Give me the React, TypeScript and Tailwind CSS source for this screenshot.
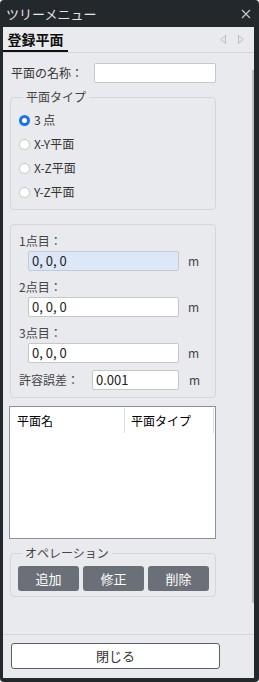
import React from "react";

const font = { fontFamily: '"Noto Sans CJK JP", "Noto Sans", sans-serif' };

function Radio({ checked, label }: { checked?: boolean; label: string }) {
  return (
    <div className="flex items-center h-[24px]">
      {checked ? (
        <div className="w-[11px] h-[11px] rounded-full border-[3.5px] border-[#1a73e8] bg-white box-border" />
      ) : (
        <div className="w-[11px] h-[11px] rounded-full border border-[#c6c8cc] bg-white box-border" />
      )}
      <span className="ml-[4px] text-[12px] leading-[14px] text-[#333]">{label}</span>
    </div>
  );
}

function PointGroup({ label, focused, first }: { label: string; focused?: boolean; first?: boolean }) {
  return (
    <div className={first ? "" : "mt-[8px]"}>
      <div className="h-[16px] leading-[16px] text-[12px] text-[#444]">{label}</div>
      <div className="flex items-center mt-[2px] ml-[9px]">
        <div
          className={
            "w-[151px] h-[20px] border rounded-[2px] box-border flex items-center pl-[3px] text-[13px] text-[#222] " +
            (focused ? "bg-[#dce8f8] border-[#c3cad4]" : "bg-white border-[#c4c7cc]")
          }
        >
          0, 0, 0
        </div>
        <span className="ml-[9px] text-[12px] text-[#444]">m</span>
      </div>
    </div>
  );
}

export default function App() {
  return (
    <div
      style={font}
      className="w-[259px] h-[682px] bg-[#23282d] rounded-[4px] pl-[3px] pr-[5px] pb-[4px] flex flex-col box-border overflow-hidden"
    >
      {/* title bar */}
      <div className="h-[27px] flex items-center justify-between shrink-0">
        <span className="ml-[3px] text-[13px] text-[#e4e6e8] leading-none">ツリーメニュー</span>
        <svg width="10" height="10" viewBox="0 0 10 10" className="mr-[3px]">
          <path d="M1 1 L9 9 M9 1 L1 9" stroke="#c8cbcf" strokeWidth="1.1" />
        </svg>
      </div>

      {/* body */}
      <div className="flex-1 bg-[#e9eaed] flex flex-col min-h-0">
        {/* tab row */}
        <div className="h-[26px] border-b border-[#d4d6d9] flex items-stretch justify-between shrink-0 box-border">
          <div className="w-[65px] border-b-2 border-[#111] flex items-center justify-center box-border">
            <span className="text-[14px] font-bold text-[#111] leading-none mt-[1px]">登録平面</span>
          </div>
          <div className="flex items-center gap-[12px] mr-[10px]">
            <svg width="6" height="9" viewBox="0 0 6 9">
              <path d="M5.5 0.5 L0.8 4.5 L5.5 8.5 Z" fill="none" stroke="#b9bcc1" strokeWidth="1" />
            </svg>
            <svg width="6" height="9" viewBox="0 0 6 9">
              <path d="M0.5 0.5 L5.2 4.5 L0.5 8.5 Z" fill="none" stroke="#b9bcc1" strokeWidth="1" />
            </svg>
          </div>
        </div>

        {/* main */}
        <div className="flex-1 flex min-h-0">
          <div className="flex-1 pl-[7px] pt-[10px]">
            <div className="w-[206px]">
              {/* name row */}
              <div className="flex items-center justify-between">
                <span className="ml-[1px] text-[12px] text-[#333]">平面の名称：</span>
                <div className="w-[122px] h-[20px] bg-white border border-[#c4c7cc] rounded-[2px] box-border" />
              </div>

              {/* plane type */}
              <fieldset className="mt-[7px] border border-[#d4d6da] rounded-[4px] pl-[8px] pb-[5px]">
                <legend className="ml-[4px] px-[3px] text-[12px] leading-[14px] text-[#444]">平面タイプ</legend>
                <div className="pt-[4px]">
                  <Radio checked label="3 点" />
                  <Radio label="X-Y平面" />
                  <Radio label="X-Z平面" />
                  <Radio label="Y-Z平面" />
                </div>
              </fieldset>

              {/* points */}
              <div className="mt-[14px] border border-[#d4d6da] rounded-[4px] pl-[8px] pt-[8px] pb-[7px]">
                <PointGroup first label="1点目：" focused />
                <PointGroup label="2点目：" />
                <PointGroup label="3点目：" />
                <div className="flex items-center mt-[7px]">
                  <span className="w-[73px] text-[12px] text-[#444]">許容誤差：</span>
                  <div className="w-[87px] h-[20px] bg-white border border-[#c4c7cc] rounded-[2px] box-border flex items-center pl-[3px] text-[13px] text-[#222]">
                    0.001
                  </div>
                  <span className="ml-[10px] text-[12px] text-[#444]">m</span>
                </div>
              </div>

              {/* table */}
              <div className="mt-[8px] -ml-[1px] w-[207px] h-[133px] bg-white border border-[#8d9096] box-border">
                <div className="flex h-[25px] items-stretch mt-[1px]">
                  <div className="w-[115px] border-r border-[#dcdde0] flex items-center pl-[7px] text-[12px] text-black">
                    平面名
                  </div>
                  <div className="w-[89px] border-r border-[#dcdde0] flex items-center pl-[6px] text-[12px] text-black">
                    平面タイプ
                  </div>
                </div>
              </div>

              {/* operations */}
              <fieldset className="mt-[7px] border border-[#d4d6da] rounded-[4px] pl-[7px] pb-[5px]">
                <legend className="ml-[4px] px-[3px] text-[12px] leading-[14px] text-[#444]">オペレーション</legend>
                <div className="flex gap-[4px] pt-[6px]">
                  <button className="w-[61px] h-[25px] bg-[#6b7078] rounded-[3px] text-white text-[13px]">追加</button>
                  <button className="w-[61px] h-[25px] bg-[#6b7078] rounded-[3px] text-white text-[13px]">修正</button>
                  <button className="w-[61px] h-[25px] bg-[#6b7078] rounded-[3px] text-white text-[13px]">削除</button>
                </div>
              </fieldset>
            </div>
          </div>
          {/* scrollbar */}
          <div className="w-[2px] pt-[17px] pb-[31px] flex">
            <div className="w-[2px] flex-1 bg-[#bcbec2]" />
          </div>
        </div>

        {/* footer */}
        <div className="h-[44px] border-t border-[#d4d6d9] shrink-0 pl-[8px] pt-[7px] box-border">
          <button className="w-[209px] h-[26px] bg-white border border-[#5b6067] rounded-[3px] text-[13px] text-[#333]">
            閉じる
          </button>
        </div>
      </div>
    </div>
  );
}
